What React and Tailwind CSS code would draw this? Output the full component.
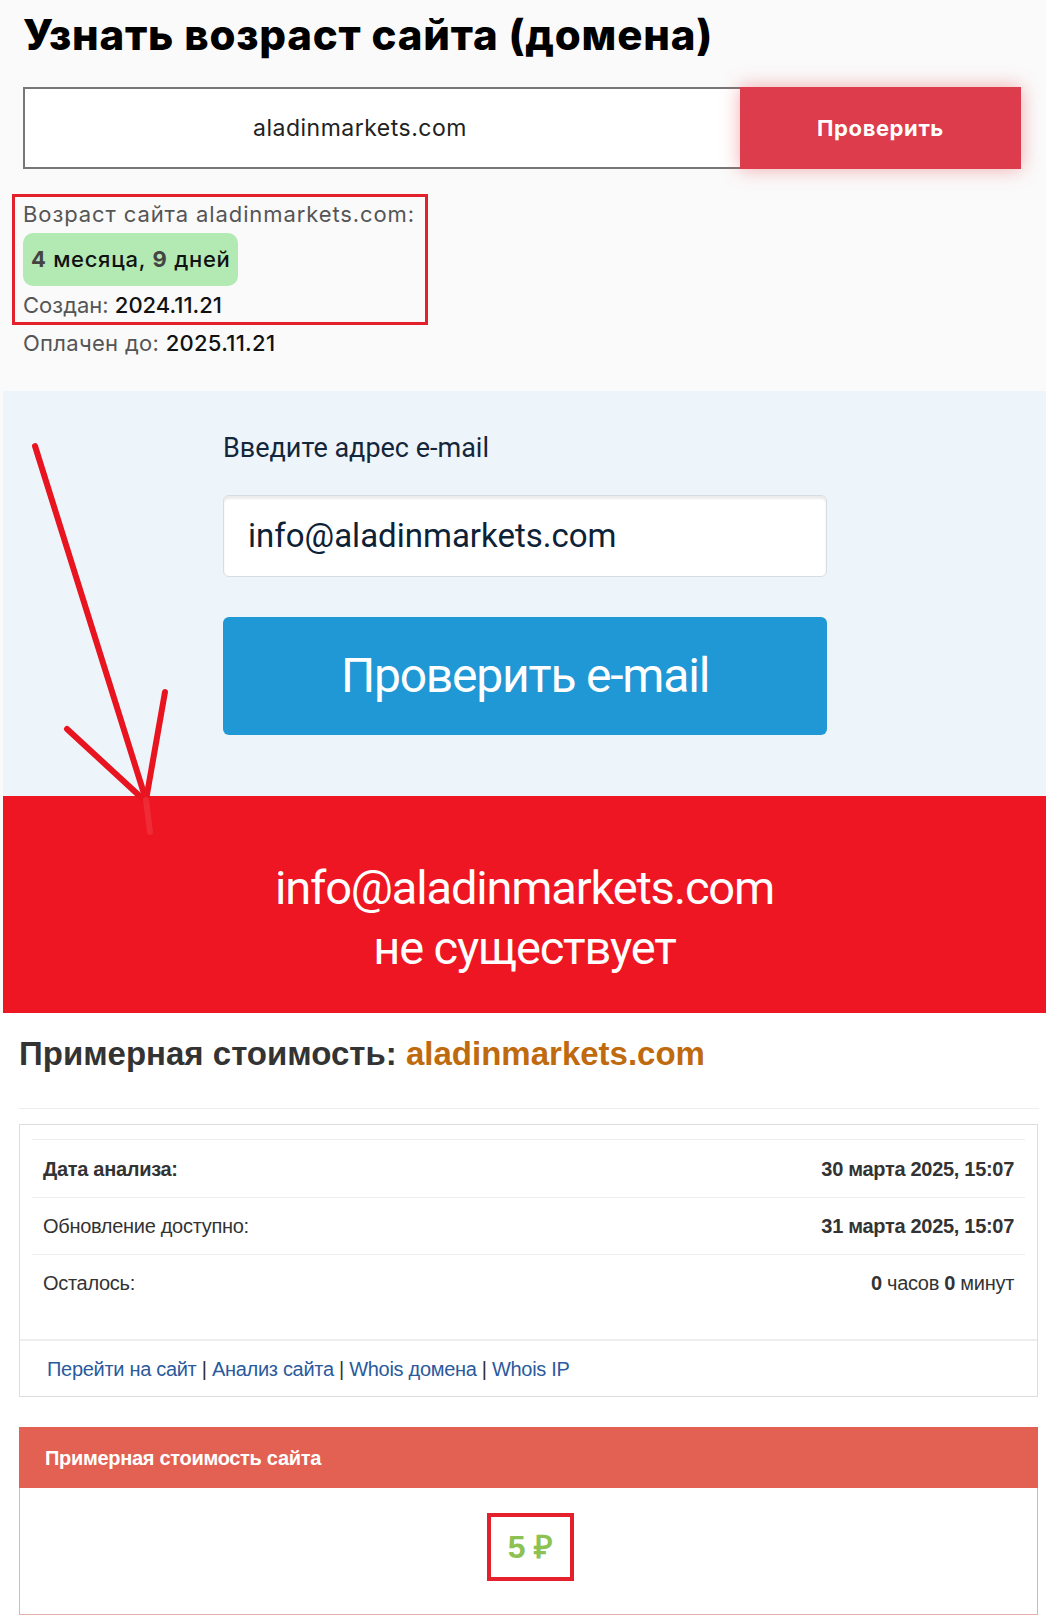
import React from "react";

function Arrow() {
  return (
    <svg
      className="pointer-events-none absolute left-0 top-0"
      width="220"
      height="860"
      viewBox="0 0 220 860"
    >
      <g stroke="#e8141f" strokeWidth="6" strokeLinecap="round" fill="none">
        <line x1="35" y1="446" x2="146" y2="800" />
        <line x1="165" y1="692" x2="146" y2="800" />
        <line x1="67" y1="729" x2="144" y2="800" />
      </g>
      <line x1="146" y1="800" x2="150" y2="832" stroke="#f03a44" strokeWidth="6" strokeLinecap="round" opacity="0.6" />
    </svg>
  );
}

export default function App() {
  const inter = { fontFamily: "Inter, 'Noto Sans', sans-serif" };
  return (
    <div className="relative w-[1046px] min-h-[1620px] bg-white">
      {/* Top section */}
      <section
        className="bg-[#fafafa] pl-[23px] pt-[11px] pb-[34px]"
        style={inter}
      >
        <h1 className="text-[42px] leading-[48px] font-extrabold text-black tracking-[0.8px]">
          Узнать возраст сайта (домена)
        </h1>
        <div className="mt-[28px] flex h-[82px] w-[998px]">
          <div className="flex-1 flex items-center border-2 border-r-0 border-[#777] bg-white pl-[228px] text-[23px] tracking-[0.5px] text-[#222]">
            aladinmarkets.com
          </div>
          <div className="w-[281px] flex items-center justify-center bg-[#dc3c4c] text-white text-[22px] tracking-[0.6px] font-bold shadow-[0_0_18px_rgba(230,70,80,0.45)]">
            Проверить
          </div>
        </div>
        <div className="mt-[25px] ml-[-11px] w-[416px] border-[3px] border-[#e3202b] pl-[8px] pt-[3px] pb-[3px]">
          <div className="text-[22px] leading-[28px] tracking-[0.9px] text-[#555]">
            Возраст сайта aladinmarkets.com:
          </div>
          <div className="mt-[5px] inline-flex h-[53px] items-center rounded-[10px] bg-[#b3eab3] px-[8px] text-[22px] tracking-[0.7px] text-[#111] font-medium">
            <span className="font-bold text-[#444]">4</span>&nbsp;месяца,&nbsp;
            <span className="font-bold text-[#444]">9</span>&nbsp;дней
          </div>
          <div className="mt-[5px] text-[22px] leading-[28px] text-[#555]">
            Создан: <span className="text-[#111] font-medium">2024.11.21</span>
          </div>
        </div>
        <div className="mt-[4px] text-[22px] leading-[28px] tracking-[0.3px] text-[#555]">
          Оплачен до: <span className="text-[#111] font-medium">2025.11.21</span>
        </div>
      </section>

      {/* Email checker */}
      <div className="bg-[#fafafa] pl-[3px]" style={{ fontFamily: "Roboto, 'Noto Sans', sans-serif" }}>
        <section className="bg-[#eef5fa] pt-[41px] pb-[61px]">
          <div className="ml-[220px] w-[604px]">
            <div className="text-[27px] leading-[32px] text-[#14263a]">
              Введите адрес e-mail
            </div>
            <div className="mt-[31px] flex h-[82px] items-center rounded-[6px] border border-[#d9dcde] bg-white pl-[24px] text-[33px] text-[#0d2236] shadow-[inset_0_3px_2px_rgba(0,0,0,0.08)]">
              info@aladinmarkets.com
            </div>
            <div className="mt-[40px] flex h-[118px] items-center justify-center rounded-[6px] bg-[#1f98d5] text-[48px] tracking-tight text-white">
              Проверить e-mail
            </div>
          </div>
        </section>
        <section className="bg-[#ee1622] pt-[62px] pb-[35px] text-center text-white text-[47px] leading-[60px] tracking-tight">
          <div>info@aladinmarkets.com</div>
          <div>не существует</div>
        </section>
      </div>

      {/* Cost section */}
      <section
        className="pl-[19px] pt-[22px] w-[1039px]"
        style={{ fontFamily: "'Liberation Sans', Arial, sans-serif" }}
      >
        <h2 className="text-[33px] leading-[38px] font-bold text-[#333]">
          Примерная стоимость: <span className="text-[#bf6a0e]">aladinmarkets.com</span>
        </h2>
        <div className="mt-[35px] h-px bg-[#eee]" />
        <div className="mt-[15px] w-[1019px] border border-[#ddd] bg-white">
          <div className="mx-[12px] pt-[14px] pb-[28px] text-[20px] text-[#333] tracking-[-0.3px]">
            <div className="flex h-[58px] items-center justify-between border-t border-[#eee] px-[11px]">
              <span className="font-bold">Дата анализа:</span>
              <span className="font-bold">30 марта 2025, 15:07</span>
            </div>
            <div className="flex h-[57px] items-center justify-between border-t border-[#eee] px-[11px]">
              <span>Обновление доступно:</span>
              <span className="font-bold">31 марта 2025, 15:07</span>
            </div>
            <div className="flex h-[57px] items-center justify-between border-t border-[#eee] px-[11px]">
              <span>Осталось:</span>
              <span>
                <b>0</b> часов <b>0</b> минут
              </span>
            </div>
          </div>
          <div className="flex h-[57px] items-center border-t-2 border-[#eee] pl-[27px] text-[20px] tracking-[-0.3px] text-[#333]">
            <span className="text-[#2a5a9c]">Перейти на сайт</span>&nbsp;|&nbsp;
            <span className="text-[#2a5a9c]">Анализ сайта</span>&nbsp;|&nbsp;
            <span className="text-[#2a5a9c]">Whois домена</span>&nbsp;|&nbsp;
            <span className="text-[#2a5a9c]">Whois IP</span>
          </div>
        </div>

        <div className="mt-[30px] w-[1019px]">
          <div className="flex h-[61px] items-center bg-[#e26152] pl-[26px] text-[20px] font-bold text-white tracking-[-0.3px]">
            Примерная стоимость сайта
          </div>
          <div className="h-[127px] border border-t-0 border-[#e6b1ab] bg-white pt-[25px]">
            <div className="ml-[467px] flex h-[68px] w-[87px] items-center justify-center border-4 border-[#e3202b] text-[32px] font-bold text-[#8dc152]">
              5 ₽
            </div>
          </div>
        </div>
      </section>

      <Arrow />
    </div>
  );
}
